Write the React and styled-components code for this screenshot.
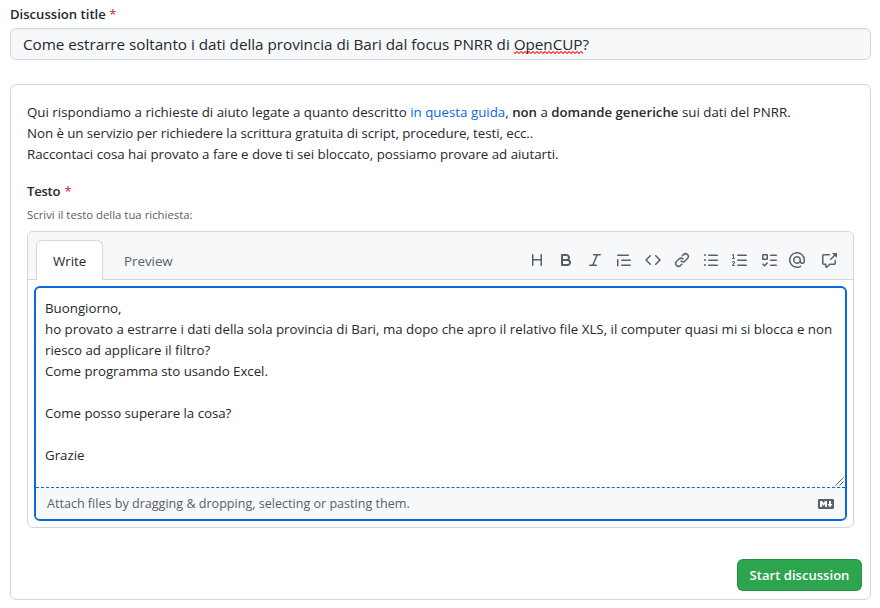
import React from 'react';
import styled, { createGlobalStyle } from 'styled-components';

const GlobalStyle = createGlobalStyle`
  * { box-sizing: border-box; }
  body {
    margin: 0;
    background: #fff;
    color: #24292f;
    font: 400 13.3px/21px 'Open Sans', 'Noto Sans', sans-serif;
  }
`;

const Page = styled.form`
  display: flex;
  flex-direction: column;
  width: 880px;
  height: 608px;
  padding: 4px 9px 8px 10px;
`;

const Label = styled.label`
  display: block;
  height: 24px;
  font-size: 13.1px;
  font-weight: 600;
  white-space: pre;
  letter-spacing: ${(p) => p.$spacing || 0}px;
`;

const Required = styled.span`
  color: #cf222e;
  font-weight: 400;
  margin-left: ${(p) => p.$gap || 0}px;
`;

const TitleField = styled.div`
  flex: none;
  height: 32px;
  padding: 0 12px;
  border: 1px solid #d0d7de;
  border-radius: 6px;
  background: #f6f8fa;
  box-shadow: inset 0 1px 0 rgba(208, 215, 222, 0.2);
  font-size: 15.25px;
  line-height: 30px;
  letter-spacing: -0.025px;
  white-space: nowrap;
`;

const Misspelled = styled.span`
  display: inline-block;
  line-height: 20px;
  background: url("data:image/svg+xml,%3Csvg xmlns='http://www.w3.org/2000/svg' width='4' height='3'%3E%3Cpath d='M-1 .5L1 2.5L3 .5L5 2.5' fill='none' stroke='%23f33' stroke-width='1.1'/%3E%3C/svg%3E") repeat-x left bottom;
`;

const Card = styled.section`
  flex: none;
  height: 516px;
  margin-top: 24px;
  padding: 17px 8px 8px 16px;
  border: 1px solid #d0d7de;
  border-radius: 6px;
  display: flex;
  flex-direction: column;
`;

const Intro = styled.p`
  margin: 0 0 16px;
  white-space: nowrap;
`;

const Line = styled.span`
  display: block;
  min-height: 21px;
  white-space: pre;
  letter-spacing: ${(p) => p.$spacing || 0}px;
`;

const Link = styled.a`
  color: #0969da;
  text-decoration: none;
`;

const Strong = styled.strong`
  font-size: 13.2px;
  font-weight: 600;
`;

const Hint = styled.p`
  margin: 0 0 7px;
  padding-top: 1px;
  height: 19px;
  color: #57606a;
  font-size: 11.36px;
  line-height: 18px;
`;

const Editor = styled.div`
  flex: none;
  width: 827px;
  height: 297px;
  border: 1px solid #d0d7de;
  border-radius: 6px;
`;

const TabBar = styled.div`
  display: flex;
  justify-content: space-between;
  height: 48px;
  padding: 8px 16px 0 8px;
  border-bottom: 1px solid #d0d7de;
  border-radius: 5px 5px 0 0;
  background: #f6f8fa;
`;

const Tabs = styled.div`
  display: flex;
`;

const Tab = styled.button`
  height: 40px;
  padding: 2px 16px 0;
  border: 1px solid ${(p) => (p.$active ? '#d0d7de' : 'transparent')};
  border-bottom: 0;
  border-radius: 6px 6px 0 0;
  background: ${(p) => (p.$active ? '#fff' : 'transparent')};
  color: ${(p) => (p.$active ? '#24292f' : '#57606a')};
  font: inherit;
  line-height: 21px;
  width: ${(p) => p.$width}px;
  margin-right: 4px;
`;

const Toolbar = styled.div`
  display: flex;
  height: 40px;
  align-items: center;
  gap: 13px;
  color: #57606a;
`;

const Icon = styled.svg`
  display: block;
  flex: none;
  fill: currentColor;
  margin-left: ${(p) => p.$gap || 0}px;
`;

const Composer = styled.div`
  display: flex;
  flex-direction: column;
  height: 235px;
  margin: 6px;
  border: 2px solid #0969da;
  border-radius: 6px;
  overflow: hidden;
`;

const Message = styled.div`
  position: relative;
  height: 200px;
  padding: 10px 9px 0;
  border-bottom: 1px dashed #0969da;
`;

const Grip = styled.svg`
  position: absolute;
  right: 1px;
  bottom: 1px;
`;

const AttachBar = styled.div`
  display: flex;
  flex: 1;
  align-items: center;
  justify-content: space-between;
  padding: 0 11px;
  background: #f6f8fa;
  color: #57606a;
  font-size: 12.57px;
`;

const Actions = styled.div`
  display: flex;
  justify-content: flex-end;
  margin-top: auto;
`;

const SubmitButton = styled.button`
  width: 125px;
  height: 32px;
  padding: 0;
  border: 1px solid rgba(27, 31, 36, 0.15);
  border-radius: 6px;
  background: #2da44e;
  color: #fff;
  font: 600 13.1px/20px 'Open Sans', 'Noto Sans', sans-serif;
`;

const TOOLS = [
  ['heading', 'M3.75 2a.75.75 0 01.75.75V7h7V2.75a.75.75 0 011.5 0v10.5a.75.75 0 01-1.5 0V8.5h-7v4.75a.75.75 0 01-1.5 0V2.75A.75.75 0 013.75 2z'],
  ['bold', 'M4 2a1 1 0 00-1 1v10a1 1 0 001 1h5.5a3.5 3.5 0 001.852-6.47A3.5 3.5 0 008.5 2H4zm4.5 5a1.5 1.5 0 100-3H5v3h3.5zM5 9v3h4.5a1.5 1.5 0 000-3H5z'],
  ['italic', 'M6 2.75A.75.75 0 016.75 2h6.5a.75.75 0 010 1.5h-2.505l-3.858 9H9.25a.75.75 0 010 1.5h-6.5a.75.75 0 010-1.5h2.505l3.858-9H6.75A.75.75 0 016 2.75z'],
  ['quote', 'M1.75 2.5a.75.75 0 000 1.5h10.5a.75.75 0 000-1.5H1.75zm4 5a.75.75 0 000 1.5h8.5a.75.75 0 000-1.5h-8.5zm0 5a.75.75 0 000 1.5h8.5a.75.75 0 000-1.5h-8.5zM2.5 7.75a.75.75 0 00-1.5 0v6a.75.75 0 001.5 0v-6z'],
  ['code', 'M4.72 3.22a.75.75 0 011.06 1.06L2.06 8l3.72 3.72a.75.75 0 11-1.06 1.06L.47 8.53a.75.75 0 010-1.06l4.25-4.25zm6.56 0a.75.75 0 10-1.06 1.06L13.94 8l-3.72 3.72a.75.75 0 101.06 1.06l4.25-4.25a.75.75 0 000-1.06l-4.25-4.25z'],
  ['link', 'M7.775 3.275a.75.75 0 001.06 1.06l1.25-1.25a2 2 0 112.83 2.83l-2.5 2.5a2 2 0 01-2.83 0 .75.75 0 00-1.06 1.06 3.5 3.5 0 004.95 0l2.5-2.5a3.5 3.5 0 00-4.95-4.95l-1.25 1.25zm-4.69 9.64a2 2 0 010-2.83l2.5-2.5a2 2 0 012.83 0 .75.75 0 001.06-1.06 3.5 3.5 0 00-4.95 0l-2.5 2.5a3.5 3.5 0 004.95 4.95l1.25-1.25a.75.75 0 00-1.06-1.06l-1.25 1.25a2 2 0 01-2.83 0z'],
  ['bulleted list', 'M2 4a1 1 0 100-2 1 1 0 000 2zm3.75-1.5a.75.75 0 000 1.5h8.5a.75.75 0 000-1.5h-8.5zm0 5a.75.75 0 000 1.5h8.5a.75.75 0 000-1.5h-8.5zm0 5a.75.75 0 000 1.5h8.5a.75.75 0 000-1.5h-8.5zM3 8a1 1 0 11-2 0 1 1 0 012 0zm-1 6a1 1 0 100-2 1 1 0 000 2z'],
  ['numbered list', 'M2.003 2.5a.5.5 0 00-.723-.447l-1.003.5a.5.5 0 00.446.895l.28-.14V6H.5a.5.5 0 000 1h2.006a.5.5 0 100-1h-.503V2.5zM5 3.25a.75.75 0 01.75-.75h8.5a.75.75 0 010 1.5h-8.5A.75.75 0 015 3.25zm0 5a.75.75 0 01.75-.75h8.5a.75.75 0 010 1.5h-8.5A.75.75 0 015 8.25zm0 5a.75.75 0 01.75-.75h8.5a.75.75 0 010 1.5h-8.5a.75.75 0 01-.75-.75zM.924 10.32l.003-.004a.851.851 0 01.144-.153A.66.66 0 011.5 10c.195 0 .306.068.374.146a.57.57 0 01.128.376c0 .453-.269.682-.8 1.078l-.035.025C.692 11.98 0 12.495 0 13.5a.5.5 0 00.5.5h2.003a.5.5 0 000-1H1.146c.132-.197.351-.372.654-.597l.047-.035c.47-.35 1.156-.858 1.156-1.845 0-.365-.118-.744-.377-1.038-.268-.303-.658-.484-1.126-.484-.48 0-.84.202-1.068.392a1.858 1.858 0 00-.348.384.5.5 0 00.851.525z'],
  ['task list', 'M2 2h4a1 1 0 0 1 1 1v4a1 1 0 0 1-1 1H2a1 1 0 0 1-1-1V3a1 1 0 0 1 1-1Zm4.655 8.595a.75.75 0 0 1 0 1.06L4.03 14.28a.75.75 0 0 1-1.06 0l-1.5-1.5a.749.749 0 0 1 .326-1.275.749.749 0 0 1 .734.215l.97.97 2.095-2.095a.75.75 0 0 1 1.06 0ZM9.75 2.5h5.5a.75.75 0 0 1 0 1.5h-5.5a.75.75 0 0 1 0-1.5Zm0 5h5.5a.75.75 0 0 1 0 1.5h-5.5a.75.75 0 0 1 0-1.5Zm0 5h5.5a.75.75 0 0 1 0 1.5h-5.5a.75.75 0 0 1 0-1.5Zm-7.25-9v3h3v-3Z'],
  ['mention', 'M4.75 2.37a6.5 6.5 0 006.5 11.26.75.75 0 01.75 1.298 8 8 0 113.994-7.273.754.754 0 01.006.095v1.5a2.75 2.75 0 01-5.072 1.475A4 4 0 1112 8v1.25a1.25 1.25 0 002.5 0V7.867a6.5 6.5 0 00-9.75-5.496V2.37zM10.5 8a2.5 2.5 0 10-5 0 2.5 2.5 0 005 0z', -1],
  ['reference', 'M16 1.25v4.146a.25.25 0 01-.427.177L14.03 4.03l-3.75 3.75a.75.75 0 11-1.06-1.06l3.75-3.75-1.543-1.543A.25.25 0 0111.604 1h4.146a.25.25 0 01.25.25zM2.75 3.5a.25.25 0 00-.25.25v7.5c0 .138.112.25.25.25h2a.75.75 0 01.75.75v2.19l2.72-2.72a.75.75 0 01.53-.22h4.5a.25.25 0 00.25-.25v-2.5a.75.75 0 111.5 0v2.5A1.75 1.75 0 0113.25 13H9.06l-2.573 2.573A1.457 1.457 0 014 14.543V13H2.75A1.75 1.75 0 011 11.25v-7.5C1 2.784 1.784 2 2.75 2h5.5a.75.75 0 010 1.5h-5.5z', 3],
];

const MARKDOWN =
  'M14.85 3H1.15C.52 3 0 3.52 0 4.15v7.69C0 12.48.52 13 1.15 13h13.69c.64 0 1.15-.52 1.15-1.15v-7.7C16 3.52 15.48 3 14.85 3zM9 11H7V8L5.5 9.92 4 8v3H2V5h2l1.5 2L7 5h2v6zm2.99.5L9.5 8H11V5h2v3h1.5l-2.51 3.5z';

const MESSAGE = [
  ['Buongiorno,'],
  ['ho provato a estrarre i dati della sola provincia di Bari, ma dopo che apro il relativo file XLS, il computer quasi mi si blocca e non'],
  ['riesco ad applicare il filtro?'],
  ['Come programma sto usando Excel.', -0.03],
  [''],
  ['Come posso superare la cosa?', -0.03],
  [''],
  ['Grazie'],
];

export default function App() {
  return (
    <>
      <GlobalStyle />
      <Page>
        <Label>
          Discussion title <Required>*</Required>
        </Label>
        <TitleField>
          Come estrarre soltanto i dati della provincia di Bari dal focus PNRR di{' '}
          <Misspelled>OpenCUP</Misspelled>?
        </TitleField>
        <Card>
          <Intro>
            <Line $spacing={0.012}>
              Qui rispondiamo a richieste di aiuto legate a quanto descritto{' '}
              <Link>in questa guida</Link>, <Strong>non</Strong> a{' '}
              <Strong>domande generiche</Strong> sui dati del PNRR.
            </Line>
            <Line $spacing={-0.055}>
              Non è un servizio per richiedere la scrittura gratuita di script, procedure, testi, ecc..
            </Line>
            <Line $spacing={-0.015}>
              Raccontaci cosa hai provato a fare e dove ti sei bloccato, possiamo provare ad aiutarti.
            </Line>
          </Intro>
          <Label $spacing={-0.25}>
            Testo <Required $gap={1}>*</Required>
          </Label>
          <Hint>Scrivi il testo della tua richiesta:</Hint>
          <Editor>
            <TabBar>
              <Tabs>
                <Tab type="button" $active $width={67}>Write</Tab>
                <Tab type="button" $width={82}>Preview</Tab>
              </Tabs>
              <Toolbar>
                {TOOLS.map(([name, path, gap]) => (
                  <Icon key={name} $gap={gap} width="16" height="16" viewBox="0 0 16 16" aria-label={name}>
                    <path fillRule="evenodd" d={path} />
                  </Icon>
                ))}
              </Toolbar>
            </TabBar>
            <Composer>
              <Message>
                {MESSAGE.map(([text, spacing], i) => (
                  <Line key={i} $spacing={spacing}>{text}</Line>
                ))}
                <Grip width="9" height="9" viewBox="0 0 9 9" stroke="#555" strokeWidth="0.9" fill="none">
                  <path d="M0.5 8.5L8.5 0.5M4.5 8.5L8.5 4.5" />
                </Grip>
              </Message>
              <AttachBar>
                Attach files by dragging &amp; dropping, selecting or pasting them.
                <Icon width="16" height="16" viewBox="0 0 16 16" aria-label="markdown">
                  <path fillRule="evenodd" d={MARKDOWN} />
                </Icon>
              </AttachBar>
            </Composer>
          </Editor>
          <Actions>
            <SubmitButton type="button">Start discussion</SubmitButton>
          </Actions>
        </Card>
      </Page>
    </>
  );
}
